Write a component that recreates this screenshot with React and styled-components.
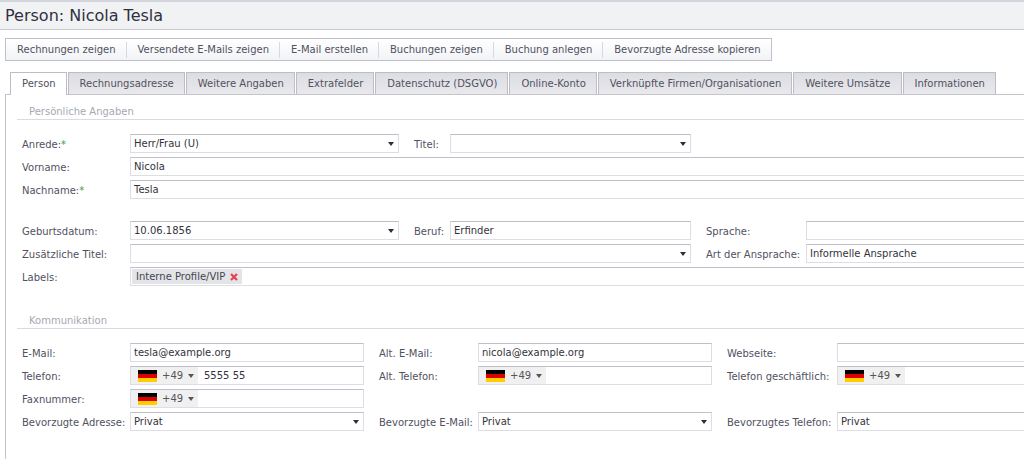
import React from "react";
import styled, { createGlobalStyle } from "styled-components";

const GlobalStyle = createGlobalStyle`
	* {
		box-sizing: border-box;
	}

	body {
		margin: 0;
		background: #fff;
		color: #51515f;
		font-family: "DejaVu Sans", Verdana, sans-serif;
		font-size: 10px;
	}

	button,
	input,
	select {
		font: inherit;
		color: inherit;
	}
`;

const Page = styled.div`
	display: flex;
	flex-direction: column;
	min-height: 100vh;
	overflow: hidden;
`;

const Header = styled.header`
	padding: 0 5px;
	border-top: 2px solid #d4d4dc;
	border-bottom: 1px solid #c8c9d0;
	background: #f1f2f4;
`;

const Title = styled.h1`
	margin: 0;
	color: #30303f;
	font-size: 16px;
	font-weight: normal;
	line-height: 27px;
`;

const Toolbar = styled.div`
	display: flex;
	align-items: center;
	width: max-content;
	height: 23px;
	margin: 8px 5px 11px;
	border: 1px solid #bfc0c9;
	background: linear-gradient(#fff, #f1f3f6);
`;

const ToolButton = styled.button`
	height: 16px;
	padding: 0 10px 0 11px;
	border: 0;
	border-left: 1px solid #d8d9df;
	background: none;
	white-space: nowrap;

	&:first-child {
		border-left: 0;
	}
`;

const Tabs = styled.div`
	position: relative;
	display: flex;
	gap: 1px;
	margin-bottom: -1px;
	padding-left: 10px;
`;

const Tab = styled.button`
	height: ${({ $active }) => ($active ? 23 : 22)}px;
	padding: 0 10px ${({ $active }) => ($active ? 1 : 0)}px 11px;
	border: 1px solid #bcbdc8;
	border-bottom: 0;
	background: ${({ $active }) =>
		$active ? "#fff" : "linear-gradient(#dcdde2, #e9e9ec)"};
	white-space: nowrap;
`;

const Panel = styled.main`
	flex: 1;
	margin-left: 5px;
	padding: 8px 0 0 11px;
	border: 1px solid #c3c4cc;
	border-right: 0;
	border-bottom: 0;
`;

const Section = styled.section`
	margin-bottom: 26px;

	&:last-child {
		margin-bottom: 0;
	}
`;

const SectionTitle = styled.h2`
	margin: 0 0 14px;
	padding: 2px 0 0 12px;
	border-bottom: 1px solid #dadbe0;
	color: #a7a8b2;
	font-size: 10px;
	font-weight: normal;
	line-height: 14px;
`;

const Fields = styled.div`
	display: grid;
	grid-template-columns: ${({ $columns }) => $columns};
	grid-auto-rows: 19px;
	row-gap: 4px;
	margin-bottom: 22px;
	padding-left: 5px;
`;

const Label = styled.label`
	grid-column: ${({ $col }) => $col};
	padding-left: ${({ $col }) => ($col === 1 ? 0 : 15)}px;
	line-height: 21px;
	white-space: nowrap;
`;

const Required = styled.span`
	color: #3f9a4c;
`;

const Box = styled.div`
	grid-column: ${({ $span }) => `span ${$span || 1}`};
	display: grid;
	min-width: 0;
	border: 1px solid #dddde3;
	border-top-color: #bebfc8;
	border-right-width: ${({ $open }) => ($open ? 0 : 1)}px;
	background: #fff;
	color: #33333b;
`;

const Control = styled.input`
	grid-area: 1 / 1;
	appearance: none;
	width: 100%;
	min-width: 0;
	height: 17px;
	padding: 0 3px;
	border: 0;
	background: none;
	outline: 0;
`;

const Arrow = styled.svg`
	grid-area: 1 / 1;
	place-self: center end;
	width: 6px;
	height: 4px;
	margin-right: 4px;
	fill: #2d2d3d;
	pointer-events: none;
`;

const PhoneBox = styled(Box)`
	display: flex;
`;

const Country = styled.button`
	display: flex;
	flex: none;
	align-items: center;
	gap: 5px;
	width: 67px;
	height: 17px;
	padding: 0 0 0 7px;
	border: 0;
	background: #f0f0f1;
	color: #555;
`;

const FlagSvg = styled.svg`
	width: 19px;
	height: 12px;
`;

const CountryArrow = styled(Arrow)`
	place-self: center;
	margin: 0;
	fill: #555;
`;

const PhoneInput = styled(Control)`
	flex: 1;
	padding-left: 6px;
`;

const ChipBox = styled(Box)`
	display: flex;
	align-items: center;
	padding-left: 1px;
`;

const Chip = styled.span`
	display: flex;
	flex: none;
	align-items: center;
	height: 15px;
	padding: 0 4px;
	background: #e3e4e7;
	color: #44444f;
`;

const RemoveButton = styled.button`
	display: flex;
	margin: 0 0 0 5px;
	padding: 0;
	border: 0;
	background: none;

	svg {
		width: 8px;
		height: 8px;
		stroke: #e8414b;
		stroke-width: 2.2;
	}
`;

const actions = [
	"Rechnungen zeigen",
	"Versendete E-Mails zeigen",
	"E-Mail erstellen",
	"Buchungen zeigen",
	"Buchung anlegen",
	"Bevorzugte Adresse kopieren",
];

const tabs = [
	"Person",
	"Rechnungsadresse",
	"Weitere Angaben",
	"Extrafelder",
	"Datenschutz (DSGVO)",
	"Online-Konto",
	"Verknüpfte Firmen/Organisationen",
	"Weitere Umsätze",
	"Informationen",
];

const personColumns = "108px 269fr 51px 241fr 115px 218fr";
const contactColumns = "108px 234fr 114px 234fr 125px 187fr";

const ArrowShape = ({ as: Shape = Arrow }) => (
	<Shape viewBox="0 0 6 4" aria-hidden="true">
		<path d="M0 0h6L3 4z" />
	</Shape>
);

const Flag = () => (
	<FlagSvg viewBox="0 0 19 12" aria-hidden="true">
		<path fill="#000" d="M0 0h19v4H0z" />
		<path fill="#d00" d="M0 4h19v4H0z" />
		<path fill="#ffce00" d="M0 8h19v4H0z" />
	</FlagSvg>
);

/* open fields continue to the right edge and have no end border */
const Field = ({ id, label, col = 1, span, required, type, value = "", open }) => {
	const renderBox = () => {
		if (type === "phone") {
			return (
				<PhoneBox $span={span} $open={open}>
					<Country type="button" aria-label={`${label} Land`}>
						<Flag />
						<span>+49</span>
						<ArrowShape as={CountryArrow} />
					</Country>
					<PhoneInput id={id} type="tel" defaultValue={value} />
				</PhoneBox>
			);
		}
		if (type === "select") {
			return (
				<Box $span={span} $open={open}>
					<Control as="select" id={id} defaultValue={value}>
						<option>{value}</option>
					</Control>
					{!open && <ArrowShape />}
				</Box>
			);
		}
		if (type === "chips") {
			return (
				<ChipBox $span={span} $open={open}>
					<Chip>
						{value}
						<RemoveButton type="button" aria-label="Entfernen">
							<svg viewBox="0 0 8 8">
								<path d="M1 1l6 6M7 1L1 7" />
							</svg>
						</RemoveButton>
					</Chip>
					<Control id={id} />
				</ChipBox>
			);
		}
		return (
			<Box $span={span} $open={open}>
				<Control id={id} defaultValue={value} />
				{type === "date" && <ArrowShape />}
			</Box>
		);
	};

	return (
		<>
			<Label htmlFor={id} $col={col}>
				{label}:{required && <Required>*</Required>}
			</Label>
			{renderBox()}
		</>
	);
};

const App = () => {
	return (
		<Page>
			<GlobalStyle />
			<Header>
				<Title>Person: Nicola Tesla</Title>
			</Header>
			<Toolbar>
				{actions.map((action) => (
					<ToolButton key={action} type="button">
						{action}
					</ToolButton>
				))}
			</Toolbar>
			<Tabs role="tablist">
				{tabs.map((tab, i) => (
					<Tab
						key={tab}
						type="button"
						role="tab"
						aria-selected={i === 0}
						$active={i === 0}
					>
						{tab}
					</Tab>
				))}
			</Tabs>
			<Panel>
				<Section>
					<SectionTitle>Persönliche Angaben</SectionTitle>
					<Fields $columns={personColumns}>
						<Field id="anrede" label="Anrede" type="select" value="Herr/Frau (U)" required />
						<Field id="titel" label="Titel" type="select" col={3} />
						<Field id="vorname" label="Vorname" value="Nicola" span={5} open />
						<Field id="nachname" label="Nachname" value="Tesla" span={5} required open />
					</Fields>
					<Fields $columns={personColumns}>
						<Field id="geburtsdatum" label="Geburtsdatum" type="date" value="10.06.1856" />
						<Field id="beruf" label="Beruf" value="Erfinder" col={3} />
						<Field id="sprache" label="Sprache" type="select" col={5} open />
						<Field id="zusatz" label="Zusätzliche Titel" type="select" span={3} />
						<Field
							id="ansprache"
							label="Art der Ansprache"
							type="select"
							value="Informelle Ansprache"
							col={5}
							open
						/>
						<Field id="labels" label="Labels" type="chips" value="Interne Profile/VIP" span={5} open />
					</Fields>
				</Section>
				<Section>
					<SectionTitle>Kommunikation</SectionTitle>
					<Fields $columns={contactColumns}>
						<Field id="email" label="E-Mail" value="tesla@example.org" />
						<Field id="alt-email" label="Alt. E-Mail" value="nicola@example.org" col={3} />
						<Field id="webseite" label="Webseite" col={5} open />
						<Field id="telefon" label="Telefon" type="phone" value="5555 55" />
						<Field id="alt-telefon" label="Alt. Telefon" type="phone" col={3} />
						<Field id="telefon-g" label="Telefon geschäftlich" type="phone" col={5} open />
						<Field id="fax" label="Faxnummer" type="phone" />
						<Field id="adresse" label="Bevorzugte Adresse" type="select" value="Privat" />
						<Field id="bev-email" label="Bevorzugte E-Mail" type="select" value="Privat" col={3} />
						<Field
							id="bev-telefon"
							label="Bevorzugtes Telefon"
							type="select"
							value="Privat"
							col={5}
							open
						/>
					</Fields>
				</Section>
			</Panel>
		</Page>
	);
};

export default App;
